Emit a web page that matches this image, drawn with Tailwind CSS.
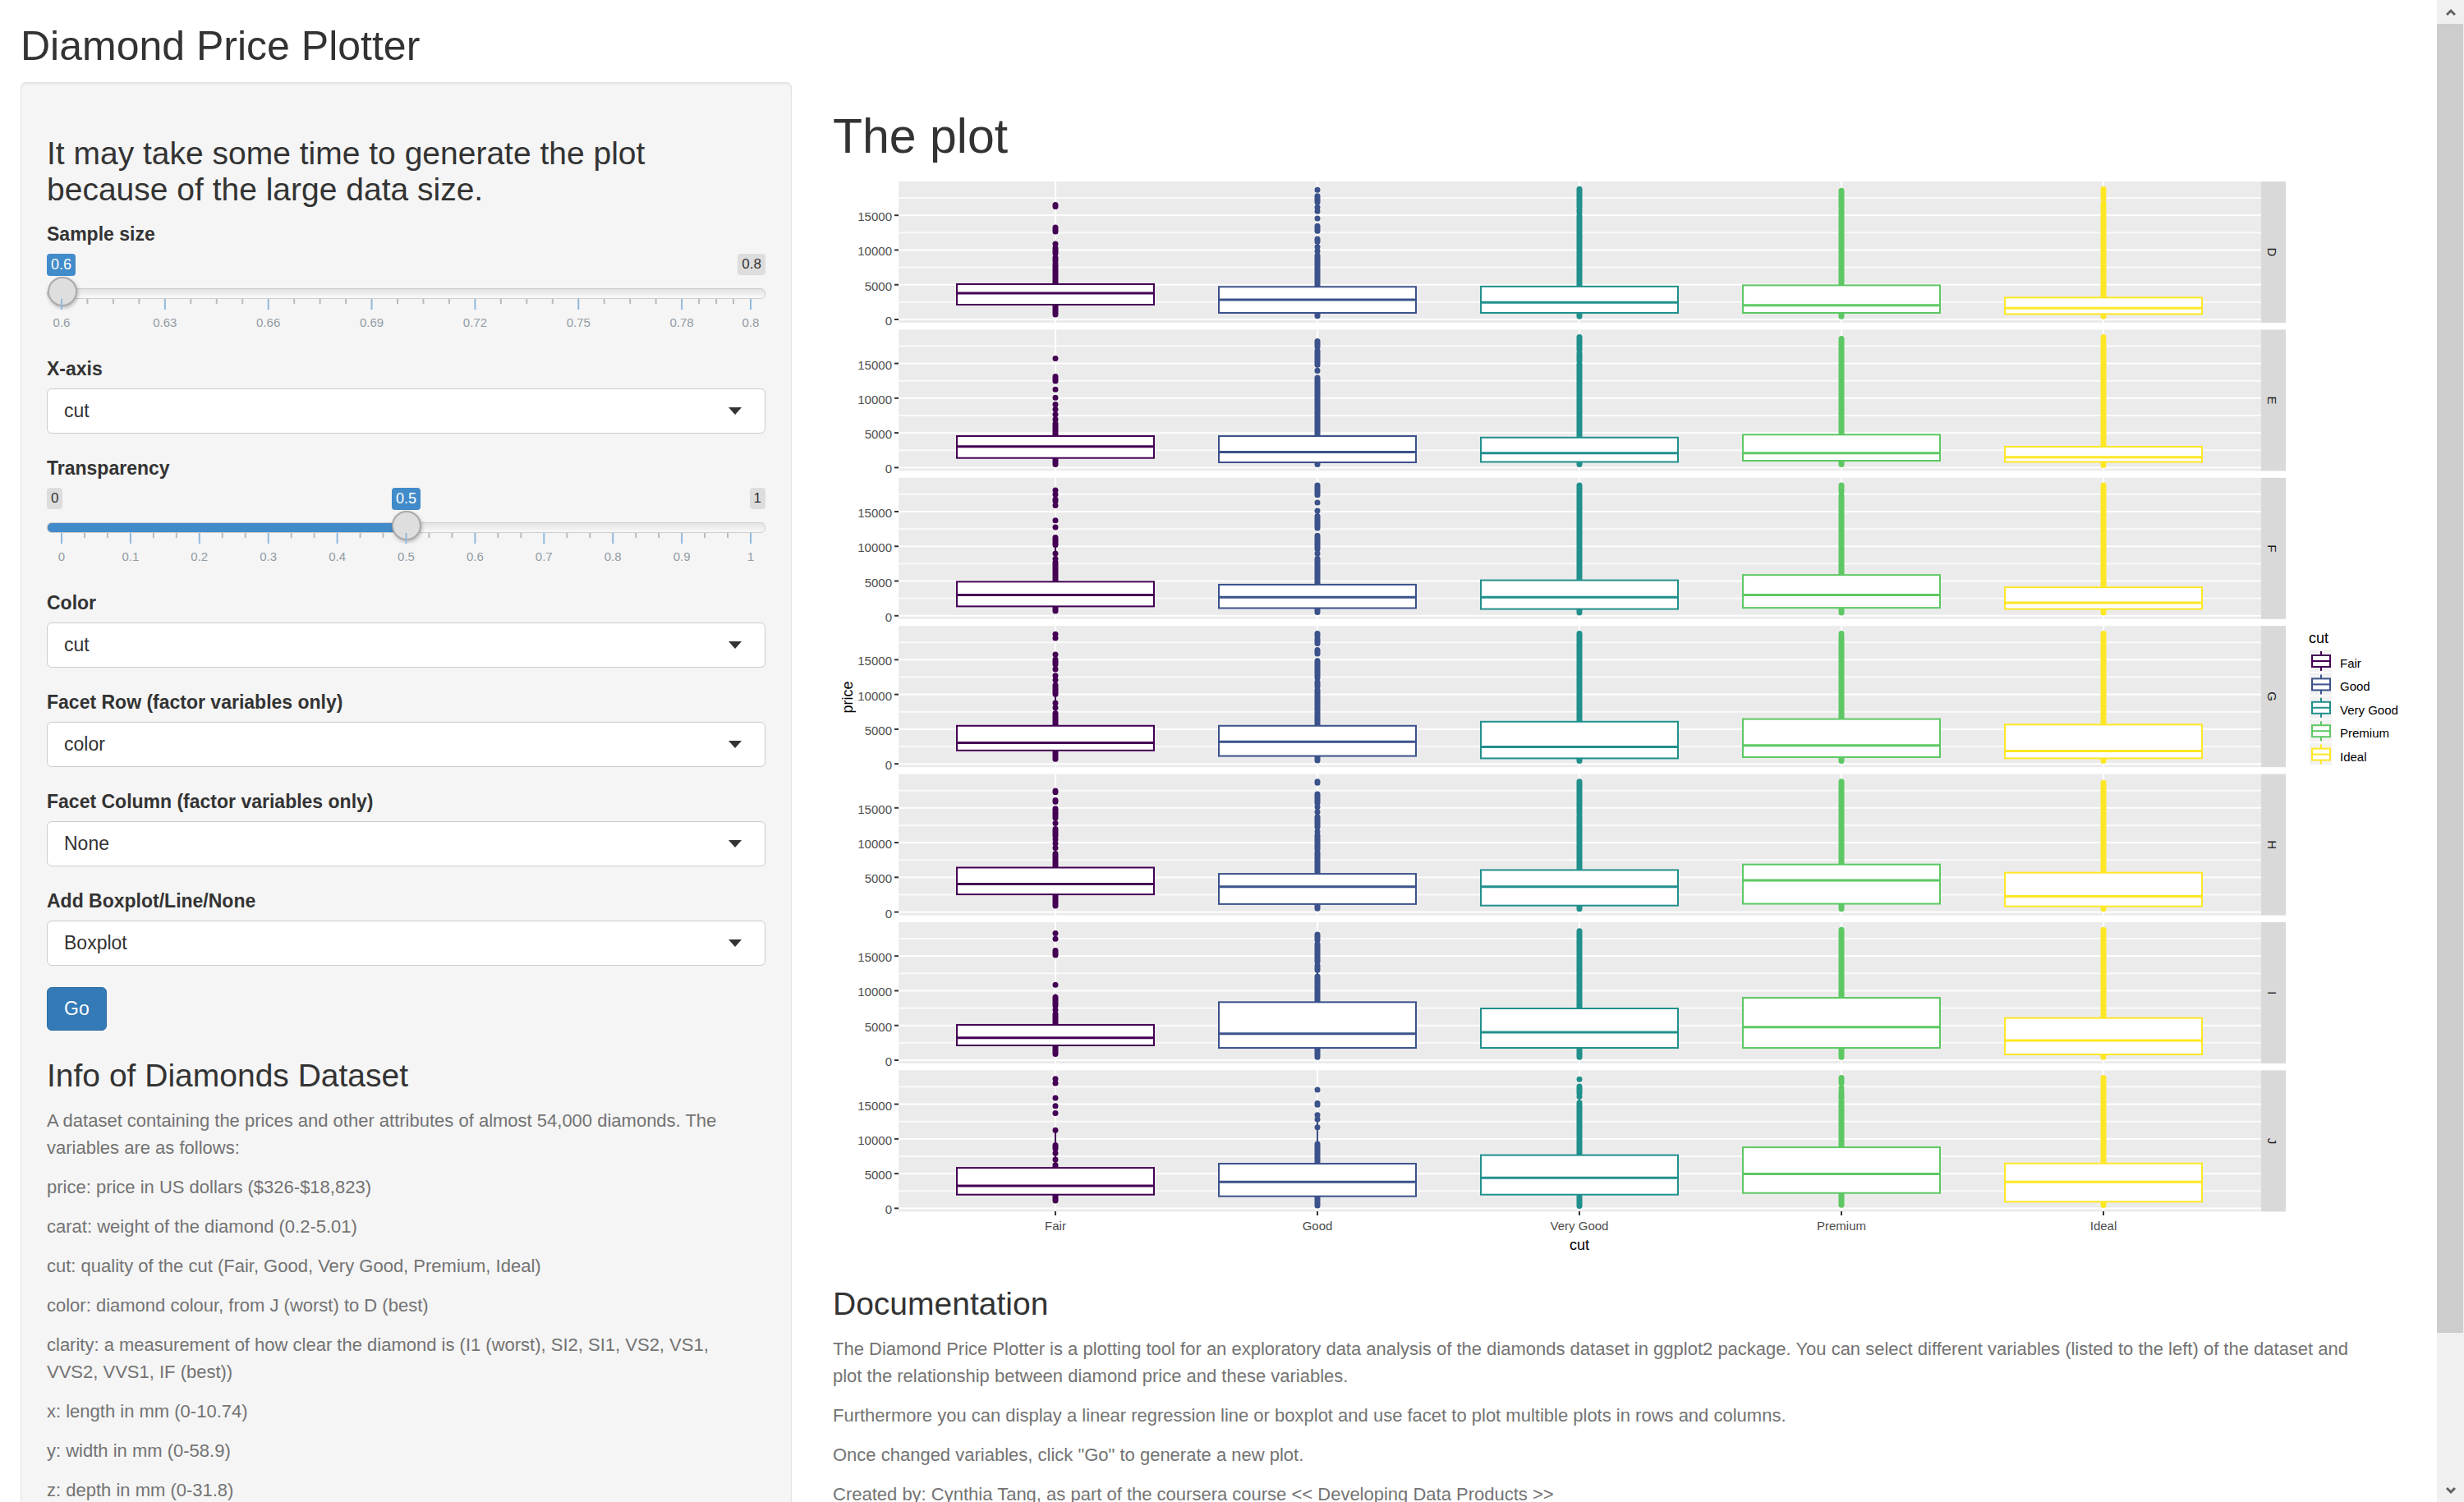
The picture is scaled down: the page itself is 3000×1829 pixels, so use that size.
<!DOCTYPE html>
<html lang="en">
<head>
<meta charset="utf-8">
<title>Diamond Price Plotter</title>
<script src="https://cdn.jsdelivr.net/npm/@tailwindcss/browser@4"></script>
</head>
<body class="flex h-screen overflow-hidden bg-white font-['Liberation_Sans',Arial,sans-serif] text-[23px] leading-[33px] text-[#333]">

<div class="min-w-0 flex-1 overflow-hidden">
  <h2 class="mt-[29px] mb-4 px-[25px] text-[50px] leading-[55px]">Diamond Price Plotter</h2>

  <div class="grid grid-cols-3">
    <div class="px-[25px]">
      <form class="rounded-md border border-[#e3e3e3] bg-[#f5f5f5] px-[31px] pt-[31px] pb-8 shadow-[inset_0_2px_2px_rgba(0,0,0,0.05)]" onsubmit="return false">
        <h3 class="mt-[33px] mb-4 text-[39px] leading-[44px]">It may take some time to generate the plot because of the large data size.</h3>

        <div class="mb-[26px]">
          <label for="sample" class="block leading-8 font-bold">Sample size</label>
          <div class="mt-2 flex h-[27px] items-start justify-between text-[17px] leading-[26px]">
            <span class="rounded bg-[#428bca] px-[5px] text-[18px] leading-[27px] text-white">0.6</span>
            <span class="rounded bg-[#ddd] px-[5px]">0.8</span>
          </div>
          <input id="sample" type="range" min="0.6" max="0.8" step="0.01" value="0.6" class="mt-px block h-[41px] w-full appearance-none bg-transparent [&::-webkit-slider-runnable-track]:h-[13px] [&::-webkit-slider-runnable-track]:rounded-md [&::-webkit-slider-runnable-track]:border [&::-webkit-slider-runnable-track]:border-[#ccc] [&::-webkit-slider-runnable-track]:bg-linear-to-b [&::-webkit-slider-runnable-track]:from-[#e2e2e2] [&::-webkit-slider-runnable-track]:to-[#fafafa] [&::-webkit-slider-thumb]:-mt-[15px] [&::-webkit-slider-thumb]:size-[36px] [&::-webkit-slider-thumb]:appearance-none [&::-webkit-slider-thumb]:rounded-full [&::-webkit-slider-thumb]:border-2 [&::-webkit-slider-thumb]:border-[#aaa] [&::-webkit-slider-thumb]:bg-[#dedede] [&::-webkit-slider-thumb]:shadow-[1px_2px_4px_rgba(0,0,0,0.25)]">
          <div class="-mt-[14px] px-[18px]"><svg id="sample-grid" class="pointer-events-none block h-[43px] w-full overflow-visible" aria-hidden="true"></svg></div>
        </div>

        <div class="mb-[26px]">
          <label for="xaxis" class="mb-2 block leading-8 font-bold">X-axis</label>
          <div class="relative">
            <select id="xaxis" class="block h-[55px] w-full appearance-none rounded-md border border-[#ccc] bg-white px-5"><option>cut</option></select>
            <svg class="pointer-events-none absolute top-[23px] right-[29px] h-[9px] w-4" viewBox="0 0 16 9"><path d="M0 0H16L8 9Z" fill="#333"/></svg>
          </div>
        </div>

        <div class="mb-[26px]">
          <label for="alpha" class="block leading-8 font-bold">Transparency</label>
          <div class="mt-2 flex h-[27px] items-start justify-between text-[17px] leading-[26px]">
            <span class="rounded bg-[#ddd] px-[5px]">0</span>
            <span class="rounded bg-[#428bca] px-[5px] text-[18px] leading-[27px] text-white">0.5</span>
            <span class="rounded bg-[#ddd] px-[5px]">1</span>
          </div>
          <input id="alpha" type="range" min="0" max="1" step="0.1" value="0.5" class="mt-px block h-[41px] w-full appearance-none bg-transparent [&::-webkit-slider-runnable-track]:h-[13px] [&::-webkit-slider-runnable-track]:rounded-md [&::-webkit-slider-runnable-track]:border [&::-webkit-slider-runnable-track]:border-[#ccc] [&::-webkit-slider-runnable-track]:bg-[linear-gradient(to_right,#428bca_50%,transparent_50%),linear-gradient(#e2e2e2,#fafafa)] [&::-webkit-slider-runnable-track]:bg-origin-border [&::-webkit-slider-thumb]:-mt-[15px] [&::-webkit-slider-thumb]:size-[36px] [&::-webkit-slider-thumb]:appearance-none [&::-webkit-slider-thumb]:rounded-full [&::-webkit-slider-thumb]:border-2 [&::-webkit-slider-thumb]:border-[#aaa] [&::-webkit-slider-thumb]:bg-[#dedede] [&::-webkit-slider-thumb]:shadow-[1px_2px_4px_rgba(0,0,0,0.25)]">
          <div class="-mt-[14px] px-[18px]"><svg id="alpha-grid" class="pointer-events-none block h-[43px] w-full overflow-visible" aria-hidden="true"></svg></div>
        </div>

        <div class="mb-[26px]">
          <label for="color" class="mb-2 block leading-8 font-bold">Color</label>
          <div class="relative">
            <select id="color" class="block h-[55px] w-full appearance-none rounded-md border border-[#ccc] bg-white px-5"><option>cut</option></select>
            <svg class="pointer-events-none absolute top-[23px] right-[29px] h-[9px] w-4" viewBox="0 0 16 9"><path d="M0 0H16L8 9Z" fill="#333"/></svg>
          </div>
        </div>
        <div class="mb-[26px]">
          <label for="frow" class="mb-2 block leading-8 font-bold">Facet Row (factor variables only)</label>
          <div class="relative">
            <select id="frow" class="block h-[55px] w-full appearance-none rounded-md border border-[#ccc] bg-white px-5"><option>color</option></select>
            <svg class="pointer-events-none absolute top-[23px] right-[29px] h-[9px] w-4" viewBox="0 0 16 9"><path d="M0 0H16L8 9Z" fill="#333"/></svg>
          </div>
        </div>
        <div class="mb-[26px]">
          <label for="fcol" class="mb-2 block leading-8 font-bold">Facet Column (factor variables only)</label>
          <div class="relative">
            <select id="fcol" class="block h-[55px] w-full appearance-none rounded-md border border-[#ccc] bg-white px-5"><option>None</option></select>
            <svg class="pointer-events-none absolute top-[23px] right-[29px] h-[9px] w-4" viewBox="0 0 16 9"><path d="M0 0H16L8 9Z" fill="#333"/></svg>
          </div>
        </div>
        <div class="mb-[26px]">
          <label for="geom" class="mb-2 block leading-8 font-bold">Add Boxplot/Line/None</label>
          <div class="relative">
            <select id="geom" class="block h-[55px] w-full appearance-none rounded-md border border-[#ccc] bg-white px-5"><option>Boxplot</option></select>
            <svg class="pointer-events-none absolute top-[23px] right-[29px] h-[9px] w-4" viewBox="0 0 16 9"><path d="M0 0H16L8 9Z" fill="#333"/></svg>
          </div>
        </div>

        <button type="submit" class="block h-[53px] rounded-md border border-[#2e6da4] bg-[#337ab7] px-5 text-white">Go</button>

        <h3 class="mt-[33px] mb-4 text-[39px] leading-[44px]">Info of Diamonds Dataset</h3>
        <div class="space-y-[15px] pr-5 text-[22px] text-[#737373]">
          <p>A dataset containing the prices and other attributes of almost 54,000 diamonds. The variables are as follows:</p>
          <p>price: price in US dollars ($326-$18,823)</p>
          <p>carat: weight of the diamond (0.2-5.01)</p>
          <p>cut: quality of the cut (Fair, Good, Very Good, Premium, Ideal)</p>
          <p>color: diamond colour, from J (worst) to D (best)</p>
          <p>clarity: a measurement of how clear the diamond is (I1 (worst), SI2, SI1, VS2, VS1, VVS2, VVS1, IF (best))</p>
          <p>x: length in mm (0-10.74)</p>
          <p>y: width in mm (0-58.9)</p>
          <p>z: depth in mm (0-31.8)</p>
        </div>
      </form>
    </div>

    <main class="col-span-2 px-[25px]">
      <h1 class="mt-[33px] mb-[17px] text-[59px] leading-[66px]">The plot</h1>
      <svg id="plot" class="block w-full font-['Liberation_Sans',Arial,sans-serif]" viewBox="0 0 1928 1317" role="img" aria-label="Boxplots of price by cut, one row per color"></svg>
      <h3 class="mt-[33px] mb-4 text-[39px] leading-[44px]">Documentation</h3>
      <div class="space-y-[15px] pr-[70px] text-[22px] text-[#737373]">
        <p>The Diamond Price Plotter is a plotting tool for an exploratory data analysis of the diamonds dataset in ggplot2 package. You can select different variables (listed to the left) of the dataset and plot the relationship between diamond price and these variables.</p>
        <p>Furthermore you can display a linear regression line or boxplot and use facet to plot multible plots in rows and columns.</p>
        <p>Once changed variables, click "Go" to generate a new plot.</p>
        <p>Created by: Cynthia Tang, as part of the coursera course &lt;&lt; Developing Data Products &gt;&gt;</p>
      </div>
    </main>
  </div>
</div>

<div class="flex w-[33px] shrink-0 flex-col bg-[#f0f0f0]" aria-hidden="true">
  <div class="flex h-[29px] items-center justify-center"><svg class="h-[10px] w-3" viewBox="0 0 12 10"><path d="M1 8L6 3L11 8" fill="none" stroke="#606060" stroke-width="3"/></svg></div>
  <div class="flex flex-1 flex-col pr-px"><div class="h-[90%] bg-[#cdcdcd]"></div></div>
  <div class="flex h-[29px] items-center justify-center"><svg class="h-[10px] w-3" viewBox="0 0 12 10"><path d="M1 2L6 7L11 2" fill="none" stroke="#606060" stroke-width="3"/></svg></div>
</div>

<script>
// Slider scales: major ticks carry a label, `minor` short ticks stand between two majors.
function scale(id, min, max, majors, minor) {
  const pct = v => (v - min) / (max - min) * 100;
  let ticks = '', labels = '';
  majors.forEach((v, i) => {
    ticks += `<rect x="${pct(v)}%" width="2" height="13" fill="#8fb9dd"/>`;
    labels += `<text x="${pct(v)}%" y="34" font-size="15" text-anchor="middle" fill="#929ca5">${v}</text>`;
    if (i < majors.length - 1) for (let k = 1; k <= minor; k++)
      ticks += `<rect x="${pct(v + (majors[i + 1] - v) * k / (minor + 1))}%" width="2" height="6" fill="#bbb"/>`;
  });
  document.getElementById(id).innerHTML = `<g transform="translate(-1 0)">${ticks}</g>${labels}`;
}
scale('sample-grid', 0.6, 0.8, [0.6, 0.63, 0.66, 0.69, 0.72, 0.75, 0.78, 0.8], 3);
scale('alpha-grid', 0, 1, [0, 0.1, 0.2, 0.3, 0.4, 0.5, 0.6, 0.7, 0.8, 0.9, 1], 2);

// Facet rows. Each cell: [Q1, median, Q3, min, runs of points above the box].
// A run is one price, or [high, low]; the last one reaches down to the box.
const cuts = ['Fair', 'Good', 'Very Good', 'Premium', 'Ideal'];
const colors = ['#440154', '#3b528b', '#21908c', '#5dc863', '#fde725'];
const rows = {
  D: [[2130, 3787, 5085, 700, [[16500, 16250], [13250, 12660], 10880, [10290, 9500], [8900, 8440], 8000]],
      [947, 2840, 4700, 500, [18650, [17780, 16880], 16130, 15580, 14550, [13450, 12740], [11590, 11200], 10450, 9860, 9230]],
      [947, 2460, 4745, 450, [[18780, 16180], [15800, 15400], 14960]],
      [947, 2050, 4920, 450, [[18550, 16100], 15720]],
      [780, 1620, 3150, 450, [[18780, 18350], [17900, 17450], [16770, 15400], 15000]]],
  E: [[1385, 3040, 4540, 450, [15730, [13130, 12460], 11240, 10060, 9100, 8400, 7650, 6940, 6350]],
      [757, 2250, 4540, 450, [[18200, 17380], [16800, 14800], 13960, 12930]],
      [820, 2090, 4330, 450, [[18780, 16950], [16500, 15350], 14900]],
      [990, 2090, 4740, 450, [18550]],
      [820, 1500, 3010, 350, [18780, 18300]]],
  F: [[1350, 3000, 4900, 700, [18080, 17490, [16780, 16500], 15880, 13730, 12760, [11280, 10200], 8960, 8200, 7690]],
      [1100, 2660, 4480, 500, [[18780, 17400], 16300, 15120, [14360, 12630], [11530, 9600], 8960, 8240]],
      [970, 2660, 5110, 450, [18780]],
      [1140, 3000, 5870, 450, [[18780, 17870], 17300]],
      [970, 1860, 4100, 450, [18780]]],
  G: [[1940, 3040, 5490, 700, [18670, 18120, 15760, [15040, 14320], 13640, 12720, 12080, [11360, 10050], 8790, 8110, 7300]],
      [1140, 3200, 5490, 500, [[18780, 18500], [18080, 17360], [16390, 15880], [14830, 12380], [11790, 11150], 10650]],
      [800, 2450, 6080, 450, [18780]],
      [970, 2660, 6460, 450, [18780, 18300]],
      [800, 1850, 5660, 450, [18780]]],
  H: [[2540, 4020, 6400, 900, [[17460, 17260], [16110, 15900], [14870, 13560], 12800, [11960, 10940], 10480, 9890, 9250, 8400]],
      [1150, 3640, 5500, 500, [[18780, 18600], [16980, 15720], 15120, 14400, [13690, 12210], 11570, [11030, 9040], 8600]],
      [935, 3640, 6050, 450, [[18780, 14150], 13800]],
      [1190, 4570, 6850, 450, [18780]],
      [820, 2250, 5670, 450, [18600]]],
  I: [[2130, 3230, 5090, 900, [18260, 17470, [15800, 15140], 10840, [9070, 7850], 7250, 6660]],
      [1770, 3820, 8360, 450, [[18100, 17300], [16720, 14150], [13640, 12970], 12070]],
      [1770, 4020, 7450, 450, [18600]],
      [1770, 4770, 8990, 450, [18780]],
      [830, 2840, 6070, 450, [18780]]],
  J: [[1975, 3230, 5830, 1100, [18650, 18020, 15890, 14750, 13720, 11240, [9110, 8600], 7930, 7020, 6230]],
      [1740, 3790, 6430, 400, [17070, [15120, 14920], 13450, 12820, 11670, 9270]],
      [1975, 4380, 7660, 350, [18580, [17550, 16560], 16090, 15220]],
      [2210, 4970, 8790, 500, [[18780, 18060], 17350, [16800, 15800], 15420]],
      [950, 3790, 6470, 450, [18780]]]
};
const L = 80, R = 1739, H = 172, cx = i => 271 + 319 * i;
let g = '';
Object.entries(rows).forEach(([name, cells], r) => {
  const top = 5 + 180.4 * r, y = v => top + 168 - v * 0.008455;
  g += `<rect x="${L}" y="${top}" width="${R - L}" height="${H}" fill="#ebebeb"/><rect x="${R}" y="${top}" width="30" height="${H}" fill="#d9d9d9"/>`;
  for (let v = 0; v < 19000; v += 2500)
    g += `<rect x="${L}" y="${y(v) - 1}" width="${R - L}" height="2" fill="#fff" opacity="${v % 5000 ? 0.75 : 0.95}"/>`;
  for (let v = 0; v <= 15000; v += 5000)
    g += `<rect x="${L - 5}" y="${y(v) - 1}" width="5" height="2" fill="#333"/><text x="${L - 8}" y="${y(v) + 7}" font-size="15" text-anchor="end" fill="#4d4d4d">${v}</text>`;
  g += `<text transform="translate(1747 ${top + H / 2}) rotate(90)" font-size="15" text-anchor="middle" fill="#1a1a1a">${name}</text>`;
  cells.forEach(([q1, med, q3, min, runs], i) => {
    const x = cx(i), c = colors[i];
    g += `<rect x="${x - 1}" y="${top}" width="2" height="${H}" fill="#fff"/>`;
    const w = Math.min(q3 + 1.5 * (q3 - q1), Array.isArray(runs[0]) ? runs[0][0] : runs[0]);
    g += `<path d="M${x} ${y(w)}V${y(q3)}" stroke="${c}" stroke-width="2"/>`;
    let d = `M${x} ${y(q1)}V${y(min)}`;
    runs.forEach((p, k) => {
      const [a, b] = Array.isArray(p) ? p : [p, k === runs.length - 1 ? q3 : p - 1];
      d += `M${x} ${y(a)}V${y(b)}`;
    });
    g += `<path d="${d}" stroke="${c}" stroke-width="7" stroke-linecap="round"/>`;
    g += `<rect x="${x - 120}" y="${y(q3)}" width="240" height="${y(q1) - y(q3)}" fill="#fff" stroke="${c}" stroke-width="2"/><path d="M${x - 120} ${y(med)}h240" stroke="${c}" stroke-width="3"/>`;
  });
});
cuts.forEach((n, i) => {
  g += `<rect x="${cx(i) - 1}" y="1259" width="2" height="5" fill="#333"/><text x="${cx(i)}" y="1282" font-size="15" text-anchor="middle" fill="#4d4d4d">${n}</text>`;
  const t = 575 + 28.4 * i, c = colors[i];
  g += `<rect x="1798" y="${t}" width="27" height="27" fill="#f2f2f2"/><path d="M1812 ${t + 2}v24" stroke="${c}" stroke-width="2"/><rect x="1801" y="${t + 7}" width="22" height="14" fill="#fff" stroke="${c}" stroke-width="2"/><path d="M1801 ${t + 14}h22" stroke="${c}" stroke-width="2"/><text x="1835" y="${t + 22}" font-size="15" fill="#000">${n}</text>`;
});
g += `<text x="${cx(2)}" y="1306" font-size="18" text-anchor="middle" fill="#000">cut</text>
<text x="1797" y="567" font-size="18" fill="#000">cut</text>
<text transform="translate(24 633) rotate(-90)" font-size="18" text-anchor="middle" fill="#000">price</text>`;
document.getElementById('plot').innerHTML = g;
</script>
</body>
</html>
